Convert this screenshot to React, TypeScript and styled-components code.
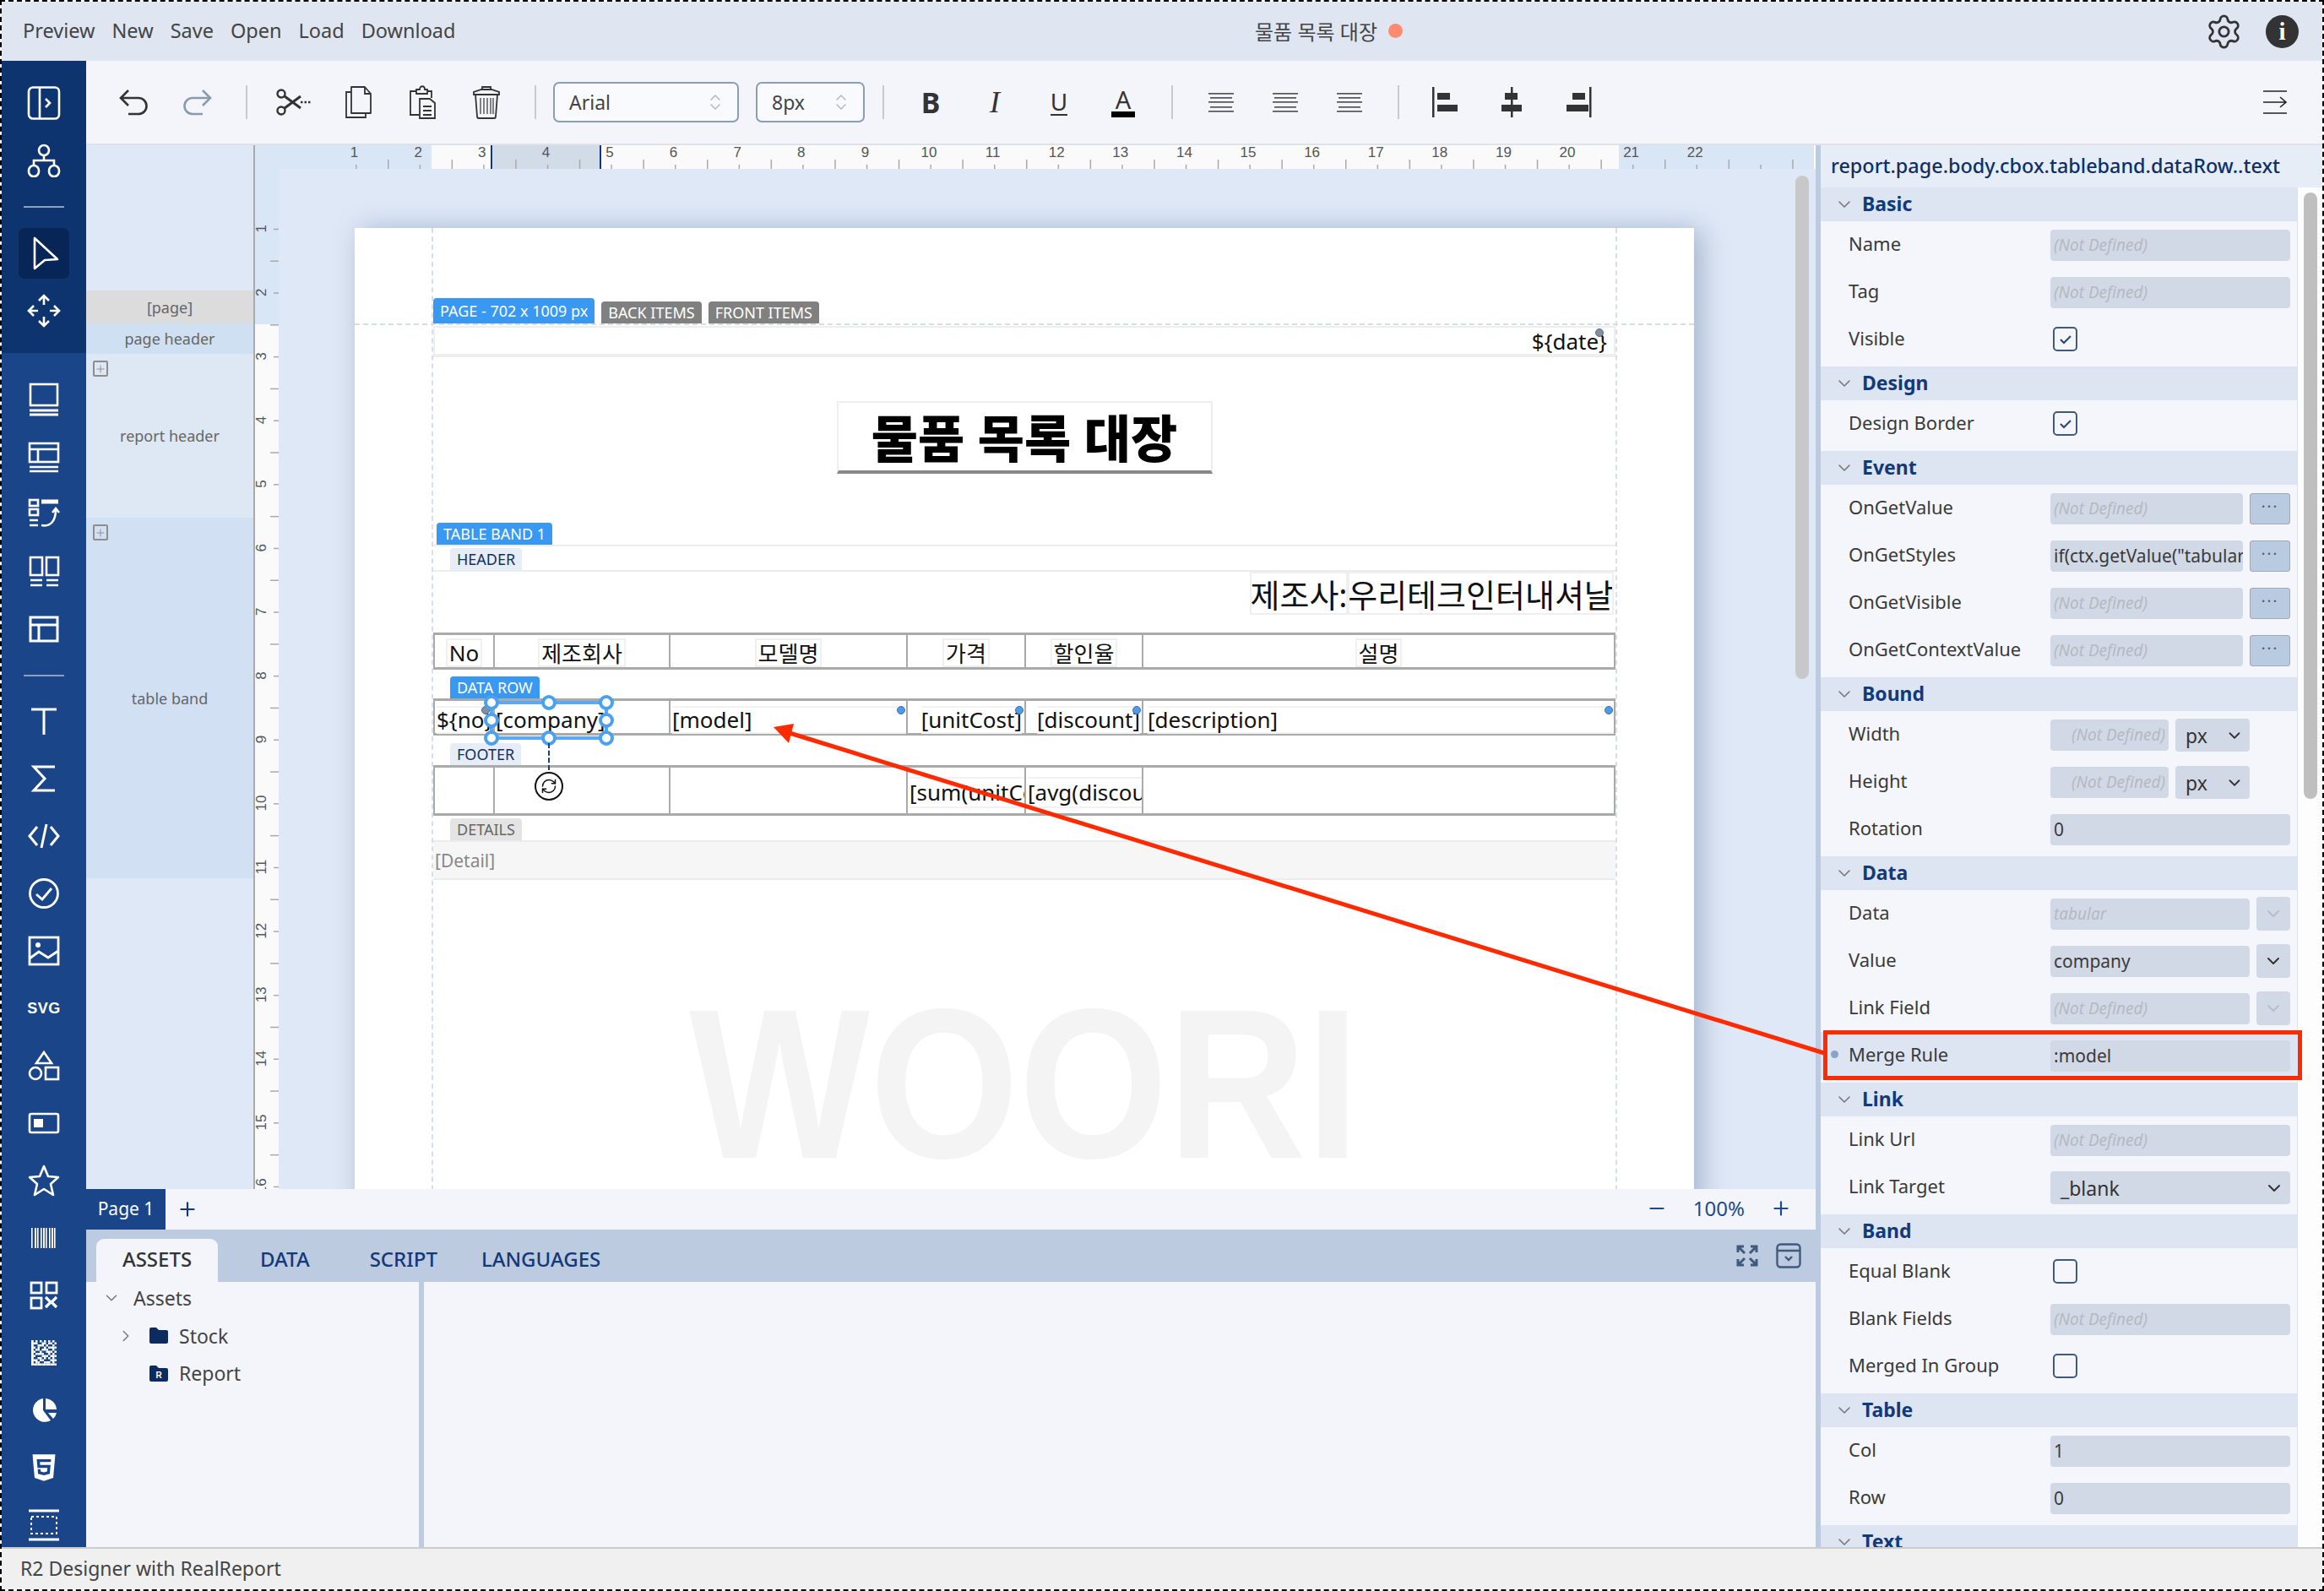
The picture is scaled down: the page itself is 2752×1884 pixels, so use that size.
import React from 'react';
import styled, { createGlobalStyle } from 'styled-components';
import { ChevronDown, ChevronRight, ChevronsUpDown, Settings, RefreshCw, Plus, Minus } from 'lucide-react';
import { FaHtml5 } from 'react-icons/fa';

const SANS = '"Noto Sans", "Noto Sans CJK KR", sans-serif';
const NAVY = '#12397a';

const GlobalStyle = createGlobalStyle`
  html, body { margin: 0; padding: 0; background: #fff; }
  * { box-sizing: border-box; }
`;

const Frame = styled.div`
  position: relative;
  display: flex;
  flex-direction: column;
  width: 2752px;
  height: 1884px;
  overflow: hidden;
  border: 2px dashed #000;
  font-family: ${SANS};
  color: #333;
`;

/* ---------- top bar ---------- */
const TopBar = styled.header`
  display: flex;
  align-items: center;
  flex: 0 0 70px;
  padding-right: 28px;
  background: #dfe6f2;
`;

const MenuGroup = styled.nav`
  display: flex;
  gap: 20px;
  width: 1484px;
  padding: 0 0 3px 25px;
  font-size: 23.5px;
  color: #444;
`;

const DocTitle = styled.div`
  display: flex;
  align-items: center;
  gap: 13px;
  padding-bottom: 1px;
  font-size: 24px;
  color: #444;
`;

const DirtyDot = styled.span`
  width: 17px;
  height: 17px;
  border-radius: 50%;
  background: #ff8a70;
`;

const TopActions = styled.div`
  display: flex;
  align-items: center;
  gap: 27px;
  margin-left: auto;
  color: #333;
`;

const InfoBadge = styled.span`
  display: flex;
  align-items: center;
  justify-content: center;
  width: 39px;
  height: 39px;
  border-radius: 50%;
  background: #333;
  color: #fff;
  font-family: "Liberation Serif", serif;
  font-weight: 700;
  font-size: 29px;
`;

/* ---------- body ---------- */
const Main = styled.div`
  display: flex;
  flex: 0 0 1760px;
  min-height: 0;
  height: 1760px;
`;

const SideBar = styled.aside`
  display: flex;
  flex-direction: column;
  flex: 0 0 100px;
  min-height: 0;
  overflow: hidden;
  background: #1a4689;
`;

const SideTop = styled.div`
  display: flex;
  flex-direction: column;
  align-items: center;
  flex: 0 0 346px;
  padding-top: 16px;
  background: #0e3470;
`;

const SideLower = styled.div`
  display: flex;
  flex-direction: column;
  align-items: center;
  flex: none;
  padding-top: 21px;
`;

const NavButton = styled.div<{ $active?: boolean }>`
  display: flex;
  align-items: center;
  justify-content: center;
  flex: 0 0 68px;
  width: 60px;
  color: #fff;
  ${({ $active }) => $active && `
    flex-basis: 60px;
    margin: 4px 0;
    background: #082557;
    border-radius: 7px;
  `}
`;

const SvgLabel = styled.span`
  font-family: "Liberation Sans", sans-serif;
  font-weight: 700;
  font-size: 18px;
  letter-spacing: 0.5px;
`;

const NavDivider = styled.div<{ $after: number }>`
  flex: 0 0 2px;
  width: 48px;
  margin: 20px 0 ${({ $after }) => $after}px;
  background: #8ca0bf;
`;

const Content = styled.div`
  display: flex;
  flex-direction: column;
  flex: 1;
  min-width: 0;
  min-height: 0;
`;

/* ---------- toolbar ---------- */
const Toolbar = styled.div`
  display: flex;
  align-items: center;
  flex: 0 0 100px;
  padding: 0 18px;
  background: #f3f5fb;
  border-bottom: 2px solid #e0e2e6;
`;

const ToolButton = styled.div<{ $dim?: boolean }>`
  display: flex;
  align-items: center;
  justify-content: center;
  flex: 0 0 76px;
  height: 44px;
  color: ${({ $dim }) => ($dim ? '#8a9bb0' : '#333')};
`;

const ToolSep = styled.div`
  flex: 0 0 2px;
  height: 40px;
  margin: 0 17px 0 19px;
  background: #c5c9d0;
`;

const ToolGroup = styled.div`
  display: flex;
  margin-left: 2px;
`;

const SelectBox = styled.div<{ $w: number }>`
  display: flex;
  align-items: center;
  justify-content: space-between;
  width: ${({ $w }) => $w}px;
  height: 48px;
  padding: 0 14px 0 17px;
  background: #f9fafd;
  border: 2px solid #8a9dba;
  border-radius: 7px;
  font-size: 23px;
  color: #aab4c4;
`;

const SelectPair = styled.div`
  display: flex;
  gap: 20px;
  margin: 0 2px 0 3px;
`;

const SelectText = styled.span`
  color: #444;
`;

const BoldGlyph = styled.span`
  font-weight: 700;
  font-size: 34px;
`;

const ItalicGlyph = styled.span`
  font-family: "Liberation Serif", serif;
  font-style: italic;
  font-size: 36px;
`;

const UnderGlyph = styled.span`
  font-size: 28px;
  line-height: 30px;
  border-bottom: 2px solid #333;
`;

const ColorGlyph = styled.span`
  font-size: 29px;
  line-height: 29px;
  border-bottom: 7px solid #000;
  padding: 0 5px;
`;

const ToolEnd = styled(ToolButton)`
  margin-left: auto;
`;

/* ---------- workspace ---------- */
const Workspace = styled.div`
  display: flex;
  flex: 1;
  min-height: 0;
`;

const CenterColumn = styled.div`
  display: flex;
  flex-direction: column;
  flex: 0 0 2048px;
  min-height: 0;
`;

const Designer = styled.div`
  display: flex;
  flex: 0 0 1236px;
  min-height: 0;
`;

const BandColumn = styled.div`
  display: flex;
  flex-direction: column;
  flex: 0 0 198px;
  background: #dfe8f6;
`;

const BandLabel = styled.div<{ $h: number; $bg: string }>`
  position: relative;
  display: flex;
  align-items: center;
  justify-content: center;
  flex: 0 0 ${({ $h }) => $h}px;
  background: ${({ $bg }) => $bg};
  font-size: 18px;
  color: #666;
`;

const ExpandMark = styled.span`
  position: absolute;
  top: 8px;
  left: 8px;
  display: flex;
  align-items: center;
  justify-content: center;
  width: 18px;
  height: 19px;
  border: 2px solid #8d8d8d;
  border-radius: 2px;
  color: #8d8d8d;
`;

const RulerColumn = styled.div`
  display: flex;
  flex-direction: column;
  flex: 1;
  min-width: 0;
`;

const RulerRow = styled.div`
  display: flex;
  flex: 1;
  min-height: 0;
`;

const RulerSvg = styled.svg`
  display: block;
  flex: none;
`;

const Canvas = styled.div`
  position: relative;
  flex: 1;
  overflow: hidden;
  padding: 70px 0 0 90px;
  background: #dfe8f6;
`;

const CanvasThumb = styled.div`
  position: absolute;
  top: 8px;
  right: 8px;
  width: 16px;
  height: 596px;
  border-radius: 8px;
  background: #c8c8c8;
`;

const Sheet = styled.div`
  position: relative;
  width: 1586px;
  height: 1300px;
  background: #fff;
  box-shadow: 8px 2px 30px rgba(70, 100, 145, 0.4);
`;

const Watermark = styled.div`
  position: absolute;
  top: 923px;
  left: 396px;
  font-family: "Liberation Sans", sans-serif;
  font-weight: 700;
  font-size: 252px;
  line-height: 181px;
  color: #f4f4f4;
  transform: scaleX(0.9);
  transform-origin: left top;
`;

const HGuide = styled.div`
  position: absolute;
  top: 113px;
  left: 0;
  right: 0;
  border-top: 2px dashed #d5dde9;
`;

const BandArea = styled.div`
  position: relative;
  width: 1404px;
  height: 100%;
  margin-left: 91px;
  padding-top: 83px;
  border-left: 2px dashed #d8dfec;
  border-right: 2px dashed #d8dfec;
`;

const TagRow = styled.div`
  display: flex;
  align-items: flex-end;
  gap: 8px;
  height: 30px;
  margin-bottom: 3px;
`;

const Tag = styled.span<{ $kind: 'blue' | 'gray' | 'pale' | 'light'; $h?: number }>`
  display: flex;
  align-items: center;
  height: ${({ $h }) => $h ?? 26}px;
  padding: 0 8px;
  border-radius: 4px 4px 0 0;
  font-size: 18px;
  white-space: nowrap;
  background: ${({ $kind }) =>
    $kind === 'blue' ? '#3898f2' : $kind === 'gray' ? '#808080' : $kind === 'pale' ? '#e6edf6' : '#e4e4e4'};
  color: ${({ $kind }) =>
    $kind === 'blue' || $kind === 'gray' ? '#fff' : $kind === 'pale' ? '#14305f' : '#666'};
`;

const PageHeaderBand = styled.div`
  display: flex;
  align-items: center;
  justify-content: flex-end;
  height: 37px;
  padding-right: 8px;
  border: 2px solid #eee;
  border-bottom-width: 4px;
  font-size: 26px;
  color: #111;
`;

const DateItem = styled.span`
  position: relative;
  line-height: 30px;
`;

const ReportHeaderBand = styled.div`
  display: flex;
  align-items: center;
  justify-content: center;
  height: 190px;
`;

const TitleBox = styled.div`
  display: flex;
  align-items: center;
  justify-content: center;
  width: 445px;
  height: 86px;
  padding-top: 3px;
  border: 2px solid #eee;
  border-bottom: 4px solid #888;
  font-weight: 900;
  font-size: 60px;
  line-height: 1;
  color: #000;
`;

const TagStrip = styled.div<{ $h: number; $left: number; $line?: boolean }>`
  display: flex;
  align-items: flex-end;
  height: ${({ $h }) => $h}px;
  padding-left: ${({ $left }) => $left}px;
  ${({ $line }) => $line && 'border-bottom: 2px solid #ececec;'}
`;

const MakerBand = styled.div`
  display: flex;
  justify-content: flex-end;
  height: 72px;
  padding-right: 2px;
  font-size: 38px;
  color: #111;
`;

const MakerBox = styled.span<{ $w: number }>`
  display: flex;
  align-items: center;
  justify-content: center;
  width: ${({ $w }) => $w}px;
  height: 51px;
  border: 2px solid #efefef;
  white-space: nowrap;
  overflow: hidden;
`;

const TableRow = styled.div<{ $h: number }>`
  display: grid;
  grid-template-columns: 69px 208px 281px 140px 139px 1fr;
  height: ${({ $h }) => $h}px;
  width: 1400px;
  border: solid #aaa;
  border-width: 3px 2px;
`;

const Cell = styled.div<{ $open?: boolean; $justify?: string; $padL?: number; $padR?: number }>`
  position: relative;
  display: flex;
  align-items: center;
  justify-content: ${({ $justify }) => $justify ?? 'flex-start'};
  min-width: 0;
  padding: 4px ${({ $padR }) => $padR ?? 0}px 0 ${({ $padL }) => $padL ?? 0}px;
  overflow: ${({ $open }) => ($open ? 'visible' : 'hidden')};
  font-size: 26px;
  color: #111;
  white-space: nowrap;
  & + & { border-left: 2px solid #aaa; }
`;

const CellText = styled.span<{ $fill?: boolean; $h?: number }>`
  display: flex;
  align-items: center;
  ${({ $fill }) => $fill && 'flex: 1;'}
  height: ${({ $h }) => $h ?? 33}px;
  border: solid #f2f2f2;
  border-width: 2px 0;
`;

const CellDot = styled.i<{ $gray?: boolean; $right: number; $top?: number }>`
  position: absolute;
  top: ${({ $top }) => $top ?? 6}px;
  right: ${({ $right }) => $right}px;
  width: 10px;
  height: 10px;
  border-radius: 50%;
  background: ${({ $gray }) => ($gray ? '#8a8f96' : '#4e9bea')};
  border: 1px solid #3c6ea8;
`;

const HeadText = styled.span`
  display: flex;
  align-items: center;
  height: 34px;
  padding: 0 2px;
  border: 2px solid #f0f0f0;
  font-size: 26px;
`;

const Selection = styled.div`
  position: absolute;
  top: 0;
  left: -6px;
  width: 140px;
  height: 46px;
  border: 4px solid #5ba8f5;
  z-index: 2;
`;

const Handle = styled.span<{ $x: number; $y: number }>`
  position: absolute;
  left: calc((100% + 4px) * ${({ $x }) => $x / 100} - 11px);
  top: calc((100% + 4px) * ${({ $y }) => $y / 100} - 11px);
  width: 18px;
  height: 18px;
  border: 4px solid #4ba0f0;
  border-radius: 50%;
  background: #fff;
`;

const RotateLine = styled.span`
  position: absolute;
  top: 46px;
  left: 65px;
  height: 32px;
  border-left: 2px dashed #16407f;
`;

const RotateKnob = styled.span`
  position: absolute;
  top: 80px;
  left: 49px;
  display: flex;
  align-items: center;
  justify-content: center;
  width: 34px;
  height: 34px;
  border: 2px solid #111;
  border-radius: 50%;
  background: #fff;
  color: #111;
`;

const DetailBand = styled.div`
  display: flex;
  align-items: center;
  height: 47px;
  padding-left: 2px;
  background: #f6f6f6;
  border: solid #ececec;
  border-width: 2px 0;
  font-size: 21px;
  color: #888;
`;

/* ---------- page bar and dock ---------- */
const PageBar = styled.div`
  display: flex;
  align-items: center;
  flex: 0 0 48px;
  padding-right: 28px;
  background: #f3f5fb;
  color: ${NAVY};
`;

const PageTab = styled.div`
  display: flex;
  align-items: center;
  justify-content: center;
  width: 94px;
  height: 100%;
  padding-bottom: 3px;
  background: #1a4689;
  color: #fff;
  font-size: 21px;
`;

const AddPage = styled.span`
  display: flex;
  margin-left: 13px;
`;

const ZoomGroup = styled.div`
  display: flex;
  align-items: center;
  gap: 30px;
  margin-left: auto;
  padding-bottom: 3px;
  font-size: 24px;
  color: #1f4a8a;
`;

const DockTabs = styled.div`
  display: flex;
  align-items: flex-end;
  flex: 0 0 62px;
  padding: 0 17px 0 12px;
  background: #bccbdf;
  color: #3f5a7d;
`;

const DockTab = styled.div<{ $active?: boolean; $ml?: number }>`
  display: flex;
  align-items: center;
  justify-content: center;
  height: 51px;
  padding-bottom: 4px;
  margin-left: ${({ $ml }) => $ml ?? 0}px;
  font-size: 24px;
  font-weight: 500;
  color: ${NAVY};
  ${({ $active }) => $active && `
    width: 144px;
    background: #f3f5fb;
    border-radius: 9px 9px 0 0;
    color: #333;
  `}
`;

const DockIcons = styled.div`
  display: flex;
  align-items: center;
  gap: 21px;
  align-self: center;
  margin-left: auto;
`;

const DockBody = styled.div`
  display: flex;
  flex: 1;
  min-height: 0;
  background: #f3f5fb;
`;

const AssetTree = styled.div`
  flex: 0 0 400px;
  border-right: 6px solid #bccbdf;
  font-size: 23px;
  color: #444;
`;

const TreeRow = styled.div<{ $indent: number }>`
  display: flex;
  align-items: center;
  height: 44.5px;
  padding-left: ${({ $indent }) => $indent}px;
  &:first-child { margin-top: -3px; }
`;

const TreeChevron = styled.span<{ $w: number }>`
  display: flex;
  flex: 0 0 ${({ $w }) => $w}px;
  color: #777;
`;

const TreeIcon = styled.span`
  display: flex;
  margin-right: 13px;
`;

const StatusBar = styled.footer`
  display: flex;
  align-items: center;
  flex: 0 0 50px;
  padding: 0 0 3px 22px;
  background: #f0f0f0;
  border-top: 2px solid #ccc;
  font-size: 23px;
  color: #444;
`;

/* ---------- property panel ---------- */
const PanelSplitter = styled.div`
  flex: 0 0 6px;
  background: #bccbdf;
`;

const PropertyPanel = styled.div`
  display: flex;
  flex-direction: column;
  flex: 1;
  min-width: 0;
  min-height: 0;
  overflow: hidden;
  background: #fdfdfe;
`;

const PathBar = styled.div`
  display: flex;
  align-items: center;
  flex: 0 0 50px;
  padding: 0 0 3px 12px;
  background: #e6edf7;
  font-size: 23.4px;
  font-weight: 500;
  color: #0f2f66;
  white-space: nowrap;
`;

const PanelBody = styled.div`
  position: relative;
  flex: 1;
  min-height: 0;
  overflow: hidden;
`;

const PanelSections = styled.div`
  width: 565px;
  min-height: 100%;
  background: #f4f6fc;
  border-right: 1px solid #dde1e8;
`;

const PanelThumb = styled.div`
  position: absolute;
  top: 6px;
  right: 6px;
  width: 16px;
  height: 718px;
  border-radius: 8px;
  background: #bfbfbf;
`;

const SectionHead = styled.div`
  display: flex;
  align-items: center;
  height: 40px;
  padding-left: 16px;
  background: #dde5f2;
  color: #777;
`;

const SectionTitle = styled.span`
  margin: -3px 0 0 9px;
  font-size: 23px;
  font-weight: 700;
  color: ${NAVY};
`;

const SectionBody = styled.div`
  padding-bottom: 4px;
`;

const Row = styled.div<{ $hot?: boolean }>`
  position: relative;
  display: flex;
  align-items: flex-start;
  height: 56px;
  padding-top: 10px;
  ${({ $hot }) => $hot && 'background: #dde5f2;'}
`;

const RowLabel = styled.div`
  flex: 0 0 272px;
  padding-left: 33px;
  font-size: 22px;
  line-height: 32px;
  color: #3a3a3a;
  white-space: nowrap;
`;

const RowDot = styled.i`
  position: absolute;
  top: 22px;
  left: 12px;
  width: 9px;
  height: 9px;
  border-radius: 50%;
  background: #8ba3c4;
`;

const RedFrame = styled.div`
  position: absolute;
  top: -2px;
  left: 3px;
  right: -6px;
  bottom: -1px;
  border: 5px solid #ff2a00;
`;

const Controls = styled.div`
  display: flex;
  gap: 8px;
  width: 284px;
`;

const Field = styled.div<{ $muted?: boolean; $right?: boolean }>`
  display: flex;
  align-items: center;
  justify-content: ${({ $right }) => ($right ? 'flex-end' : 'flex-start')};
  flex: 1;
  min-width: 0;
  height: 37px;
  padding: 0 4px 2px;
  overflow: hidden;
  background: #d2d9e6;
  border-radius: 4px;
  white-space: nowrap;
  font-size: ${({ $muted }) => ($muted ? 19 : 21)}px;
  font-style: ${({ $muted }) => ($muted ? 'italic' : 'normal')};
  color: ${({ $muted }) => ($muted ? '#b4b9c2' : '#3a3a3a')};
`;

const FixedField = styled(Field)`
  flex: 0 0 140px;
`;

const MoreButton = styled.div`
  display: flex;
  align-items: center;
  justify-content: center;
  flex: 0 0 48px;
  height: 37px;
  padding-bottom: 8px;
  background: #b9cbe0;
  border: 1px solid #a3a9b2;
  border-radius: 3px;
  font-size: 18px;
  letter-spacing: 2px;
  color: #4a5a70;
`;

const SelectField = styled.div<{ $w?: number; $pad: number }>`
  display: flex;
  align-items: center;
  justify-content: space-between;
  ${({ $w }) => ($w ? `flex: 0 0 ${$w}px;` : 'flex: 1;')}
  height: 39px;
  margin-top: -1px;
  padding: 0 7px 0 ${({ $pad }) => $pad}px;
  background: #d2d9e6;
  border-radius: 4px;
  font-size: 23px;
  color: #333;
`;

const ChevronBox = styled.div<{ $dim?: boolean }>`
  display: flex;
  align-items: center;
  justify-content: center;
  flex: 0 0 40px;
  height: 40px;
  margin-top: -2px;
  background: #d2d9e6;
  border-radius: 4px;
  color: ${({ $dim }) => ($dim ? '#b8bec8' : '#333')};
`;

const CheckBox = styled.div`
  display: flex;
  align-items: center;
  justify-content: center;
  width: 29px;
  height: 29px;
  margin: 3px 0 0 3px;
  border: 2px solid #3f5a7d;
  border-radius: 5px;
  color: #2f4a6e;
`;

const ArrowLayer = styled.svg`
  position: absolute;
  top: -2px;
  left: -2px;
  pointer-events: none;
  z-index: 5;
`;

/* ---------- drawings ---------- */
const Stroke: React.FC<{ children: React.ReactNode; w?: number; h?: number; sw?: number }> = ({ children, w = 40, h = 40, sw = 2.6 }) => (
  <svg width={w} height={h} viewBox={`0 0 ${w} ${h}`} fill="none" stroke="currentColor" strokeWidth={sw}>
    {children}
  </svg>
);

const MATRIX = [
  '101010101010',
  '111001101101',
  '100111010010',
  '110100101111',
  '101101110010',
  '110010011101',
  '101111001010',
  '110001110111',
  '100110101010',
  '111011000111',
  '101100111010',
  '111111111111',
];

const navTop = [
  <Stroke key="a"><rect x="2" y="1.5" width="36" height="37" rx="5" /><path d="M15 2V38M22 15l5 5-5 5" /></Stroke>,
  <Stroke key="b"><circle cx="20" cy="8" r="6" /><path d="M20 14V20M8 26V20H32V26" /><rect x="2" y="26" width="12" height="13" rx="6" /><rect x="26" y="26" width="12" height="13" rx="6" /></Stroke>,
];

const CursorIcon = () => (
  <Stroke><path d="M9 2V38L21 28L36 27Z" strokeLinejoin="round" /></Stroke>
);

const MoveIcon = () => (
  <Stroke><path d="M14 8L20 2L26 8M20 2V13M14 32L20 38L26 32M20 38V27M8 14L2 20L8 26M2 20H13M32 14L38 20L32 26M38 20H27" /></Stroke>
);

const navLowerA = [
  <Stroke key="1"><rect x="4" y="2" width="32" height="25" /><path d="M3 33H37M3 38H37" strokeWidth="3" /></Stroke>,
  <Stroke key="2"><rect x="3" y="4" width="34" height="22" /><path d="M3 11H37M13 11V26M3 32H37M3 37H37" /></Stroke>,
  <Stroke key="3"><rect x="3" y="3" width="10" height="7" /><rect x="3" y="14" width="10" height="7" /><path d="M3 27H13M3 33H13" /><path d="M17 5H37" strokeWidth="5" /><path d="M17 33C28 35 34 28 34 14M30 18L34 13L38 18" /></Stroke>,
  <Stroke key="4"><rect x="4" y="3" width="14" height="21" /><rect x="23" y="3" width="14" height="21" /><path d="M4 30H18M4 36H18M23 30H37M23 36H37" /></Stroke>,
  <Stroke key="5" sw={3}><rect x="4" y="6" width="32" height="28" /><path d="M4 15H36M14 15V34" /></Stroke>,
];

const navLowerB = [
  <Stroke key="t" sw={3}><path d="M5 6H35M20 6V36" /></Stroke>,
  <Stroke key="s" sw={3}><path d="M33 6H8L21 20L8 34H33" /></Stroke>,
  <Stroke key="c" sw={3}><path d="M12 9L3 20L12 31M28 9L37 20L28 31M23 6L17 34" /></Stroke>,
  <Stroke key="k" sw={2.8}><circle cx="20" cy="20" r="16.5" /><path d="M11 21L18 27L29 14" /></Stroke>,
  <Stroke key="i" sw={2.8}><rect x="3" y="4" width="34" height="32" /><circle cx="13" cy="13" r="3" fill="currentColor" stroke="none" /><path d="M3 29L14 21L25 28L37 20" /></Stroke>,
  <SvgLabel key="v">SVG</SvgLabel>,
  <Stroke key="h" sw={2.6}><path d="M20 4L29 17H11Z" /><circle cx="10" cy="29" r="7" /><rect x="22" y="22" width="15" height="14" /></Stroke>,
  <Stroke key="b" sw={2.6}><rect x="3" y="9" width="34" height="22" rx="2" /><rect x="8" y="15" width="11" height="10" fill="currentColor" stroke="none" /></Stroke>,
  <Stroke key="r" sw={2.6}><path d="M20 3L25 15L37 16L28 24L31 37L20 30L9 37L12 24L3 16L15 15Z" strokeLinejoin="round" /></Stroke>,
  <svg key="g" width="40" height="40" viewBox="0 0 40 40" fill="currentColor">
    {[5, 9, 12, 16, 19, 22, 26, 29, 32].map((x, i) => <rect key={x} x={x} y="8" width={i % 3 === 1 ? 2 : 1.6} height="24" />)}
  </svg>,
  <svg key="q" width="40" height="40" viewBox="0 0 40 40" fill="none" stroke="currentColor" strokeWidth="2.8">
    <rect x="5" y="5" width="12" height="12" /><rect x="23" y="5" width="12" height="12" /><rect x="5" y="23" width="12" height="12" />
    <path d="M22 22L28 28L22 34M35 22L29 28L35 34" strokeWidth="3.2" />
  </svg>,
  <svg key="m" width="40" height="40" viewBox="0 0 40 40" fill="currentColor">
    <rect x="5" y="5" width="2.5" height="30" />
    {MATRIX.map((line, r) => line.split('').map((bit, c) => (bit === '1' ? <rect key={`${r}-${c}`} x={5 + c * 2.5} y={5 + r * 2.5} width="2.5" height="2.5" /> : null)))}
  </svg>,
  <svg key="p" width="40" height="40" viewBox="0 0 40 40" fill="currentColor">
    <path d="M19 6V20L28 32A14 14 0 1 1 19 6Z" /><path d="M22 6A14 14 0 0 1 35 19H22Z" /><path d="M35 23A14 14 0 0 1 31 30L25 23Z" />
  </svg>,
  <FaHtml5 key="f" size={36} />,
  <svg key="d" width="40" height="40" viewBox="0 0 40 40" fill="none" stroke="currentColor">
    <path d="M2 3H38M2 37H38" strokeWidth="3" /><rect x="5" y="10" width="30" height="20" strokeWidth="2" strokeDasharray="3 3" />
  </svg>,
];

const ScissorsIcon = () => (
  <Stroke sw={2.4} w={44} h={34}>
    <circle cx="7" cy="7" r="4.5" /><circle cx="7" cy="27" r="4.5" />
    <path d="M11 10L30 24M11 24L30 10" strokeWidth="3" /><path d="M30 17H42" strokeDasharray="2.5 2" />
  </Stroke>
);

const CopyIcon = () => (
  <Stroke sw={1.8} w={34} h={40}>
    <path d="M9 2H25L32 10V33H9Z" strokeLinejoin="round" /><path d="M25 2V10H32" /><path d="M9 8H3V38H26V33" />
  </Stroke>
);

const PasteIcon = () => (
  <Stroke sw={1.8} w={34} h={42}>
    <path d="M10 8H3V36H13M23 8H28V16" /><path d="M10 11V6H14C14 1 20 1 20 6H23V11Z" />
    <path d="M14 17H26L32 22V40H14Z" /><path d="M18 26H28M18 31H28M18 36H28" />
  </Stroke>
);

const TrashIcon = () => (
  <Stroke sw={1.8} w={34} h={40}>
    <path d="M2 11V8L11 5H23L32 8V11Z" /><path d="M12 5V2H22V5" />
    <path d="M4 11L6 37Q6 39 8 39H26Q28 39 28 37L30 11" />
    <path d="M10 15V34M14 15V34M18 15V34M22 15V34M25 15V34" strokeWidth="1.2" />
  </Stroke>
);

const UndoIcon: React.FC<{ flip?: boolean }> = ({ flip }) => (
  <svg width="36" height="32" viewBox="0 0 36 32" fill="none" stroke="currentColor" strokeWidth="2.6" style={flip ? { transform: 'scaleX(-1)' } : undefined}>
    <path d="M12 2L3 11L12 20M3 11H24A9.5 9.5 0 0 1 24 30H12" />
  </svg>
);

const TextAlignIcon = () => (
  <svg width="30" height="23" viewBox="0 0 30 23" fill="#555">
    {[0, 5, 10, 16, 21].map((y) => <rect key={y} x={y === 5 || y === 16 ? 2 : 0} y={y} width={y === 5 || y === 16 ? 26 : 30} height="1.7" />)}
  </svg>
);

const ObjectAlignIcon: React.FC<{ mode: 'left' | 'center' | 'right' }> = ({ mode }) => {
  const line = mode === 'left' ? 3 : mode === 'center' ? 20 : 37;
  const small = mode === 'left' ? 8 : mode === 'center' ? 12 : 16;
  const wide = mode === 'left' ? 8 : mode === 'center' ? 8 : 9;
  const wideW = mode === 'center' ? 24 : mode === 'left' ? 24 : 26;
  return (
    <svg width="40" height="36" viewBox="0 0 40 36" fill="#333">
      <rect x={line - 1} y="0" width="2.5" height="36" />
      <rect x={small} y="7" width="15" height="8" />
      <rect x={wide} y="21" width={wideW} height="8" />
    </svg>
  );
};

const CollapseIcon = () => (
  <svg width="30" height="28" viewBox="0 0 30 28" fill="none" stroke="#222" strokeWidth="1.6">
    <path d="M1 1H29M1 27H29M1 14H28M21 8L28 14L21 20" />
  </svg>
);

const ExpandIcon = () => (
  <svg width="26" height="26" viewBox="0 0 26 26" fill="none" stroke="currentColor" strokeWidth="3">
    <path d="M2 9V2H9M2 2L10 10M24 9V2H17M24 2L16 10M2 17V24H9M2 24L10 16M24 17V24H17M24 24L16 16" />
  </svg>
);

const DockPanelIcon = () => (
  <svg width="30" height="30" viewBox="0 0 30 30" fill="none" stroke="currentColor" strokeWidth="2.4">
    <rect x="1.5" y="1.5" width="27" height="27" rx="4" /><path d="M1.5 9H28.5M11 16L15 20L19 16" />
  </svg>
);

const FolderIcon: React.FC<{ mark?: boolean }> = ({ mark }) => (
  <svg width="22" height="19" viewBox="0 0 22 19">
    <path d="M0 2Q0 0 2 0H8L11 3H20Q22 3 22 5V17Q22 19 20 19H2Q0 19 0 17Z" fill="#0c2b5e" />
    {mark && <text x="11" y="15" fontSize="10" fontWeight="700" fill="#fff" textAnchor="middle" fontFamily="Liberation Sans">R</text>}
  </svg>
);

const UNIT = 75.6;
const range = (n: number) => Array.from({ length: n }, (_, i) => i);

const HorizontalRuler = () => (
  <RulerSvg width="1848" height="28">
    <rect width="1848" height="28" fill="#d9e6f6" />
    <rect x="211" width="1406" height="28" fill="#fafafa" />
    <rect x="282" width="129" height="28" fill="#d2dbe8" />
    <rect x="281" width="2" height="28" fill="#14397a" />
    <rect x="410" width="2" height="28" fill="#14397a" />
    <rect width="2" height="28" fill="#aaa" />
    {range(23).map((i) => (
      <g key={i}>
        <rect x={121 + i * UNIT} y="23" width="1.5" height="5" fill="#aaa" />
        <rect x={159 + i * UNIT} y="17" width="1.5" height="11" fill="#aaa" />
        {i < 22 && (
          <text x={119.6 + i * UNIT} y="14" fontSize="17" fill="#555" textAnchor="middle" fontFamily="Liberation Sans">{i + 1}</text>
        )}
      </g>
    ))}
  </RulerSvg>
);

const VerticalRuler = () => (
  <RulerSvg width="30" height="1208">
    <rect width="30" height="1208" fill="#fafafa" />
    <rect width="30" height="184" fill="#d9e6f6" />
    <rect width="2" height="1208" fill="#aaa" />
    {range(16).map((i) => {
      const y = 70.7 + i * UNIT;
      return (
        <g key={i}>
          <rect x="24" y={y} width="6" height="1.5" fill="#aaa" />
          <rect x="20" y={y + 37.8} width="10" height="1.5" fill="#aaa" />
          <text x="0" y="0" fontSize="17" fill="#555" textAnchor="middle" fontFamily="Liberation Sans" transform={`translate(15 ${y}) rotate(-90)`}>{i + 1}</text>
        </g>
      );
    })}
  </RulerSvg>
);

/* ---------- property data ---------- */
type Prop =
  | { label: string; kind: 'text'; value?: string; hot?: boolean }
  | { label: string; kind: 'check'; checked: boolean }
  | { label: string; kind: 'event'; value?: string }
  | { label: string; kind: 'unit' }
  | { label: string; kind: 'data'; value?: string; muted?: string }
  | { label: string; kind: 'select'; value: string };

const SECTIONS: { title: string; rows: Prop[] }[] = [
  { title: 'Basic', rows: [{ label: 'Name', kind: 'text' }, { label: 'Tag', kind: 'text' }, { label: 'Visible', kind: 'check', checked: true }] },
  { title: 'Design', rows: [{ label: 'Design Border', kind: 'check', checked: true }] },
  {
    title: 'Event',
    rows: [
      { label: 'OnGetValue', kind: 'event' },
      { label: 'OnGetStyles', kind: 'event', value: 'if(ctx.getValue("tabular.company")' },
      { label: 'OnGetVisible', kind: 'event' },
      { label: 'OnGetContextValue', kind: 'event' },
    ],
  },
  { title: 'Bound', rows: [{ label: 'Width', kind: 'unit' }, { label: 'Height', kind: 'unit' }, { label: 'Rotation', kind: 'text', value: '0' }] },
  {
    title: 'Data',
    rows: [
      { label: 'Data', kind: 'data', muted: 'tabular' },
      { label: 'Value', kind: 'data', value: 'company' },
      { label: 'Link Field', kind: 'data', muted: '(Not Defined)' },
      { label: 'Merge Rule', kind: 'text', value: ':model', hot: true },
    ],
  },
  { title: 'Link', rows: [{ label: 'Link Url', kind: 'text' }, { label: 'Link Target', kind: 'select', value: '_blank' }] },
  { title: 'Band', rows: [{ label: 'Equal Blank', kind: 'check', checked: false }, { label: 'Blank Fields', kind: 'text' }, { label: 'Merged In Group', kind: 'check', checked: false }] },
  { title: 'Table', rows: [{ label: 'Col', kind: 'text', value: '1' }, { label: 'Row', kind: 'text', value: '0' }] },
  { title: 'Text', rows: [] },
];

const NOT_DEFINED = '(Not Defined)';

const PropControl: React.FC<{ prop: Prop }> = ({ prop }) => {
  switch (prop.kind) {
    case 'check':
      return (
        <Controls>
          <CheckBox>{prop.checked && (
            <svg width="16" height="14" viewBox="0 0 16 14" fill="none" stroke="currentColor" strokeWidth="2.2"><path d="M2 7L6 11L14 3" /></svg>
          )}</CheckBox>
        </Controls>
      );
    case 'event':
      return (
        <Controls>
          <Field $muted={!prop.value}>{prop.value ?? NOT_DEFINED}</Field>
          <MoreButton>···</MoreButton>
        </Controls>
      );
    case 'unit':
      return (
        <Controls>
          <FixedField $muted $right>{NOT_DEFINED}</FixedField>
          <SelectField $w={88} $pad={12}>px<ChevronDown size={22} strokeWidth={2} /></SelectField>
        </Controls>
      );
    case 'data':
      return (
        <Controls>
          <Field $muted={!prop.value}>{prop.value ?? prop.muted}</Field>
          <ChevronBox $dim={!prop.value}><ChevronDown size={24} strokeWidth={2} /></ChevronBox>
        </Controls>
      );
    case 'select':
      return (
        <Controls>
          <SelectField $pad={12}>{prop.value}<ChevronDown size={24} strokeWidth={2} /></SelectField>
        </Controls>
      );
    default:
      return (
        <Controls>
          <Field $muted={!prop.value}>{prop.value ?? NOT_DEFINED}</Field>
        </Controls>
      );
  }
};

const HANDLES = [
  [0, 0], [50, 0], [100, 0],
  [0, 50], [100, 50],
  [0, 100], [50, 100], [100, 100],
];

const App: React.FC = () => {
  return (
    <>
      <GlobalStyle />
      <Frame>
        <TopBar>
          <MenuGroup>
            {['Preview', 'New', 'Save', 'Open', 'Load', 'Download'].map((item) => <span key={item}>{item}</span>)}
          </MenuGroup>
          <DocTitle>물품 목록 대장<DirtyDot /></DocTitle>
          <TopActions>
            <Settings size={45} strokeWidth={1.5} />
            <InfoBadge>i</InfoBadge>
          </TopActions>
        </TopBar>

        <Main>
          <SideBar>
            <SideTop>
              {navTop.map((icon, i) => <NavButton key={i}>{icon}</NavButton>)}
              <NavDivider $after={20} />
              <NavButton $active><CursorIcon /></NavButton>
              <NavButton><MoveIcon /></NavButton>
            </SideTop>
            <SideLower>
              {navLowerA.map((icon, i) => <NavButton key={i}>{icon}</NavButton>)}
              <NavDivider $after={19} />
              {navLowerB.map((icon, i) => <NavButton key={i}>{icon}</NavButton>)}
            </SideLower>
          </SideBar>

          <Content>
            <Toolbar>
              <ToolButton><UndoIcon /></ToolButton>
              <ToolButton $dim><UndoIcon flip /></ToolButton>
              <ToolSep />
              <ToolButton><ScissorsIcon /></ToolButton>
              <ToolButton><CopyIcon /></ToolButton>
              <ToolButton><PasteIcon /></ToolButton>
              <ToolButton><TrashIcon /></ToolButton>
              <ToolSep />
              <SelectPair>
                <SelectBox $w={220}><SelectText>Arial</SelectText><ChevronsUpDown size={24} strokeWidth={1.4} /></SelectBox>
                <SelectBox $w={129}><SelectText>8px</SelectText><ChevronsUpDown size={24} strokeWidth={1.4} /></SelectBox>
              </SelectPair>
              <ToolSep />
              <ToolButton><BoldGlyph>B</BoldGlyph></ToolButton>
              <ToolButton><ItalicGlyph>I</ItalicGlyph></ToolButton>
              <ToolButton><UnderGlyph>U</UnderGlyph></ToolButton>
              <ToolButton><ColorGlyph>A</ColorGlyph></ToolButton>
              <ToolSep />
              <ToolGroup>
                <ToolButton><TextAlignIcon /></ToolButton>
                <ToolButton><TextAlignIcon /></ToolButton>
                <ToolButton><TextAlignIcon /></ToolButton>
              </ToolGroup>
              <ToolSep />
              <ToolGroup>
                <ToolButton><ObjectAlignIcon mode="left" /></ToolButton>
                <ToolButton><ObjectAlignIcon mode="center" /></ToolButton>
                <ToolButton><ObjectAlignIcon mode="right" /></ToolButton>
              </ToolGroup>
              <ToolEnd><CollapseIcon /></ToolEnd>
            </Toolbar>

            <Workspace>
              <CenterColumn>
                <Designer>
                  <BandColumn>
                    <BandLabel $h={172} $bg="#dfe8f6" />
                    <BandLabel $h={39} $bg="#dcdcdc">[page]</BandLabel>
                    <BandLabel $h={36} $bg="#d0e0f3">page header</BandLabel>
                    <BandLabel $h={194} $bg="#dee7f4">
                      <ExpandMark><Plus size={14} strokeWidth={1.6} /></ExpandMark>
                      report header
                    </BandLabel>
                    <BandLabel $h={427} $bg="#d1e0f3">
                      <ExpandMark><Plus size={14} strokeWidth={1.6} /></ExpandMark>
                      table band
                    </BandLabel>
                  </BandColumn>
                  <RulerColumn>
                    <HorizontalRuler />
                    <RulerRow>
                      <VerticalRuler />
                      <Canvas>
                        <Sheet>
                          <Watermark>WOORI</Watermark>
                          <HGuide />
                          <BandArea>
                            <TagRow>
                              <Tag $kind="blue" $h={30}>PAGE - 702 x 1009 px</Tag>
                              <Tag $kind="gray">BACK ITEMS</Tag>
                              <Tag $kind="gray">FRONT ITEMS</Tag>
                            </TagRow>
                            <PageHeaderBand>
                              <DateItem>{'${date}'}<CellDot $gray $right={4} $top={0} /></DateItem>
                            </PageHeaderBand>
                            <ReportHeaderBand>
                              <TitleBox>물품 목록 대장</TitleBox>
                            </ReportHeaderBand>
                            <TagStrip $h={34} $left={4} $line><Tag $kind="blue">TABLE BAND 1</Tag></TagStrip>
                            <TagStrip $h={30} $left={20} $line><Tag $kind="pale">HEADER</Tag></TagStrip>
                            <MakerBand>
                              <MakerBox $w={116}>제조사:</MakerBox>
                              <MakerBox $w={315}>우리테크인터내셔날</MakerBox>
                            </MakerBand>
                            <TableRow $h={44}>
                              {['No', '제조회사', '모델명', '가격', '할인율', '설명'].map((h) => (
                                <Cell key={h} $justify="center"><HeadText>{h}</HeadText></Cell>
                              ))}
                            </TableRow>
                            <TagStrip $h={34} $left={20}><Tag $kind="blue">DATA ROW</Tag></TagStrip>
                            <TableRow $h={44}>
                              <Cell $padL={2}><CellText $fill>{'${no}'}</CellText><CellDot $gray $right={4} /></Cell>
                              <Cell $open $padL={1}>
                                {'[company]'}
                                <Selection>
                                  {HANDLES.map(([x, y]) => <Handle key={`${x}-${y}`} $x={x} $y={y} />)}
                                  <RotateLine />
                                  <RotateKnob><RefreshCw size={20} strokeWidth={1.8} /></RotateKnob>
                                </Selection>
                              </Cell>
                              <Cell $padL={2}><CellText $fill>[model]</CellText><CellDot $right={1} /></Cell>
                              <Cell $justify="flex-end" $padR={3}><CellText>[unitCost]</CellText><CellDot $right={1} /></Cell>
                              <Cell $justify="flex-end" $padR={2}><CellText>[discount]</CellText><CellDot $right={1} /></Cell>
                              <Cell $padL={5}><CellText $fill>[description]</CellText><CellDot $right={1} /></Cell>
                            </TableRow>
                            <TagStrip $h={35} $left={20}><Tag $kind="pale">FOOTER</Tag></TagStrip>
                            <TableRow $h={60}>
                              <Cell />
                              <Cell />
                              <Cell />
                              <Cell $padL={2}><CellText $h={37}>[sum(unitCost)]</CellText></Cell>
                              <Cell $padL={2}><CellText $h={37}>[avg(discount)]</CellText></Cell>
                              <Cell />
                            </TableRow>
                            <TagStrip $h={29} $left={20}><Tag $kind="light">DETAILS</Tag></TagStrip>
                            <DetailBand>[Detail]</DetailBand>
                          </BandArea>
                        </Sheet>
                        <CanvasThumb />
                      </Canvas>
                    </RulerRow>
                  </RulerColumn>
                </Designer>

                <PageBar>
                  <PageTab>Page 1</PageTab>
                  <AddPage><Plus size={26} strokeWidth={2} /></AddPage>
                  <ZoomGroup>
                    <Minus size={26} strokeWidth={2} />
                    <span>100%</span>
                    <Plus size={26} strokeWidth={2} />
                  </ZoomGroup>
                </PageBar>

                <DockTabs>
                  <DockTab $active>ASSETS</DockTab>
                  <DockTab $ml={50}>DATA</DockTab>
                  <DockTab $ml={71}>SCRIPT</DockTab>
                  <DockTab $ml={52}>LANGUAGES</DockTab>
                  <DockIcons>
                    <ExpandIcon />
                    <DockPanelIcon />
                  </DockIcons>
                </DockTabs>

                <DockBody>
                  <AssetTree>
                    <TreeRow $indent={19}><TreeChevron $w={37}><ChevronDown size={22} strokeWidth={1.6} /></TreeChevron>Assets</TreeRow>
                    <TreeRow $indent={36}><TreeChevron $w={39}><ChevronRight size={22} strokeWidth={1.6} /></TreeChevron><TreeIcon><FolderIcon /></TreeIcon>Stock</TreeRow>
                    <TreeRow $indent={75}><TreeIcon><FolderIcon mark /></TreeIcon>Report</TreeRow>
                  </AssetTree>
                </DockBody>
              </CenterColumn>

              <PanelSplitter />

              <PropertyPanel>
                <PathBar>report.page.body.cbox.tableband.dataRow..text</PathBar>
                <PanelBody>
                  <PanelSections>
                    {SECTIONS.map((section) => (
                      <div key={section.title}>
                        <SectionHead>
                          <ChevronDown size={24} strokeWidth={1.6} />
                          <SectionTitle>{section.title}</SectionTitle>
                        </SectionHead>
                        <SectionBody>
                          {section.rows.map((prop) => {
                            const hot = prop.kind === 'text' && prop.hot;
                            return (
                              <Row key={prop.label} $hot={hot}>
                                {hot && <RowDot />}
                                <RowLabel>{prop.label}</RowLabel>
                                <PropControl prop={prop} />
                                {hot && <RedFrame />}
                              </Row>
                            );
                          })}
                        </SectionBody>
                      </div>
                    ))}
                  </PanelSections>
                  <PanelThumb />
                </PanelBody>
              </PropertyPanel>
            </Workspace>
          </Content>
        </Main>

        <StatusBar>R2 Designer with RealReport</StatusBar>

        <ArrowLayer width="2752" height="1884" viewBox="0 0 2752 1884">
          <path d="M2160 1247L935 868" stroke="#ff2a00" strokeWidth="5" fill="none" />
          <polygon points="916,861 940,857 934,880" fill="#ff2a00" />
        </ArrowLayer>
      </Frame>
    </>
  );
};

export default App;
